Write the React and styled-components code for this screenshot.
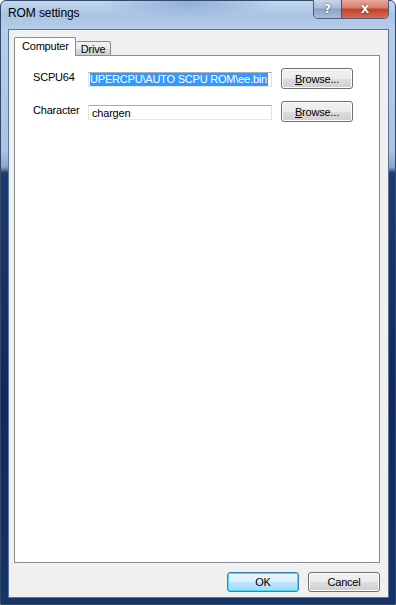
import React from "react";
import styled, { createGlobalStyle } from "styled-components";

const GlobalStyle = createGlobalStyle`
  html, body { margin: 0; padding: 0; background: #fff; }
  body { font-family: "Liberation Sans", Arial, sans-serif; }
  * { box-sizing: border-box; }
`;

const Window = styled.div`
  width: 396px;
  height: 605px;
  display: flex;
  flex-direction: column;
  padding: 0 6px 6px 7px;
  border: 1px solid #33496a;
  border-radius: 6px 6px 0 0;
  background: linear-gradient(
    to bottom,
    #c3d7ee 0px,
    #a9c4e4 14px,
    #b7cee9 30px,
    #aac4e3 150px,
    #8aa6cc 166px,
    #1d3b6e 172px,
    #10295a 400px,
    #163466 100%
  );
`;

const TitleBar = styled.div`
  height: 28px;
  display: flex;
  align-items: flex-start;
  background: radial-gradient(ellipse 90px 14px at 180px 2px, rgba(90, 130, 190, 0.45), rgba(0, 0, 0, 0));
`;

const Title = styled.div`
  padding-top: 5px;
  font-size: 12px;
  color: #000;
  letter-spacing: -0.1px;
`;

const CaptionGroup = styled.div`
  margin-left: auto;
  margin-top: -1px;
  display: flex;
  border: 1px solid #4a5e7c;
  border-top: none;
  border-radius: 0 0 5px 5px;
  overflow: hidden;
  height: 19px;
`;

const CaptionButton = styled.div`
  width: ${(p) => p.$w}px;
  height: 100%;
  display: flex;
  align-items: center;
  justify-content: center;
  color: #fff;
  font-family: "DejaVu Sans", sans-serif;
  font-weight: bold;
  font-size: ${(p) => p.$fs}px;
  text-shadow: 0 0 2px rgba(0, 0, 0, 0.7);
  border-left: ${(p) => (p.$close ? "1px solid #7a3a3a" : "none")};
  background: ${(p) =>
    p.$close
      ? "linear-gradient(to bottom, #e9a99c 0%, #d47f6f 45%, #c2402b 50%, #d86b50 100%)"
      : "linear-gradient(to bottom, #c9d7e8 0%, #a8bcd6 45%, #8aa2c3 50%, #a9bfdc 100%)"};
`;

const Client = styled.div`
  flex: 1;
  display: flex;
  flex-direction: column;
  background: #f0f0f0;
  border: 1px solid #5a7296;
  padding: 8px 8px 4px 5px;
`;

const TabStrip = styled.div`
  display: flex;
  align-items: flex-end;
  height: 18px;
  margin-bottom: -1px;
  position: relative;
  z-index: 1;
`;

const Tab = styled.div`
  height: ${(p) => (p.$active ? 19 : 15)}px;
  padding: ${(p) => (p.$active ? "2px 6px 0 7px" : "1px 5px 0 5px")};
  font-size: 11px;
  letter-spacing: -0.2px;
  color: #000;
  border: 1px solid #898c95;
  border-bottom: ${(p) => (p.$active ? "none" : "1px solid #898c95")};
  border-left: ${(p) => (p.$active ? "1px solid #898c95" : "none")};
  border-radius: 2px 2px 0 0;
  background: ${(p) =>
    p.$active ? "#fff" : "linear-gradient(to bottom, #f2f2f2 0%, #ebebeb 50%, #dcdcdc 51%, #cfcfcf 100%)"};
`;

const Panel = styled.div`
  flex: 1;
  background: #fff;
  border: 1px solid #898c95;
  padding: 12px 0 0 18px;
  display: flex;
  flex-direction: column;
  gap: 12px;
`;

const Row = styled.div`
  display: grid;
  grid-template-columns: 46px 184px 72px;
  column-gap: 9px;
  align-items: center;
  height: 21px;
`;

const Label = styled.div`
  font-size: 11px;
  letter-spacing: -0.2px;
  color: #000;
  margin-top: -3px;
  white-space: nowrap;
`;

const Edit = styled.div`
  height: 15px;
  border: 1px solid #abadb3;
  border-color: #abadb3 #dbdfe6 #e3e9ef #e2e3ea;
  background: #fff;
  display: flex;
  align-items: center;
  overflow: hidden;
  white-space: nowrap;
  font-size: 11px;
  letter-spacing: -0.2px;
  padding: 0 1px 0 ${(p) => (p.$sel ? 1 : 3)}px;
  margin-top: 2px;
`;

const Selected = styled.span`
  background: #3399ff;
  color: #fff;
  line-height: 13px;
  flex-shrink: 0;
  padding-right: 1px;
`;

const Button = styled.div`
  height: ${(p) => p.$h || 21}px;
  width: 72px;
  display: flex;
  align-items: center;
  justify-content: center;
  font-size: 11px;
  letter-spacing: -0.2px;
  color: #000;
  border: 1px solid ${(p) => (p.$default ? "#3c7fb1" : "#707070")};
  border-radius: 3px;
  box-shadow: inset 0 0 0 1px ${(p) => (p.$default ? "#48d8f9" : "#fcfcfc")};
  background: ${(p) =>
    p.$default
      ? "linear-gradient(to bottom, #eaf6fd 0%, #d9f0fc 50%, #bee6fd 51%, #a7d9f5 100%)"
      : "linear-gradient(to bottom, #f2f2f2 0%, #ebebeb 50%, #dddddd 51%, #cfcfcf 100%)"};
  u { text-decoration: underline; }
`;

const Footer = styled.div`
  display: flex;
  justify-content: flex-end;
  gap: 9px;
  padding-top: 9px;
  height: 30px;
`;

export default function App() {
  return (
    <>
      <GlobalStyle />
      <Window>
        <TitleBar>
          <Title>ROM settings</Title>
          <CaptionGroup>
            <CaptionButton $w={27} $fs={12}>?</CaptionButton>
            <CaptionButton $w={47} $fs={11} $close>X</CaptionButton>
          </CaptionGroup>
        </TitleBar>
        <Client>
          <TabStrip>
            <Tab $active>Computer</Tab>
            <Tab>Drive</Tab>
          </TabStrip>
          <Panel>
            <Row>
              <Label>SCPU64</Label>
              <Edit $sel>
                <Selected>UPERCPU\AUTO SCPU ROM\ee.bin</Selected>
              </Edit>
              <Button>
                <span><u>B</u>rowse...</span>
              </Button>
            </Row>
            <Row>
              <Label>Character</Label>
              <Edit>chargen</Edit>
              <Button>
                <span><u>B</u>rowse...</span>
              </Button>
            </Row>
          </Panel>
          <Footer>
            <Button $default $h={20}>OK</Button>
            <Button $h={20}>Cancel</Button>
          </Footer>
        </Client>
      </Window>
    </>
  );
}
